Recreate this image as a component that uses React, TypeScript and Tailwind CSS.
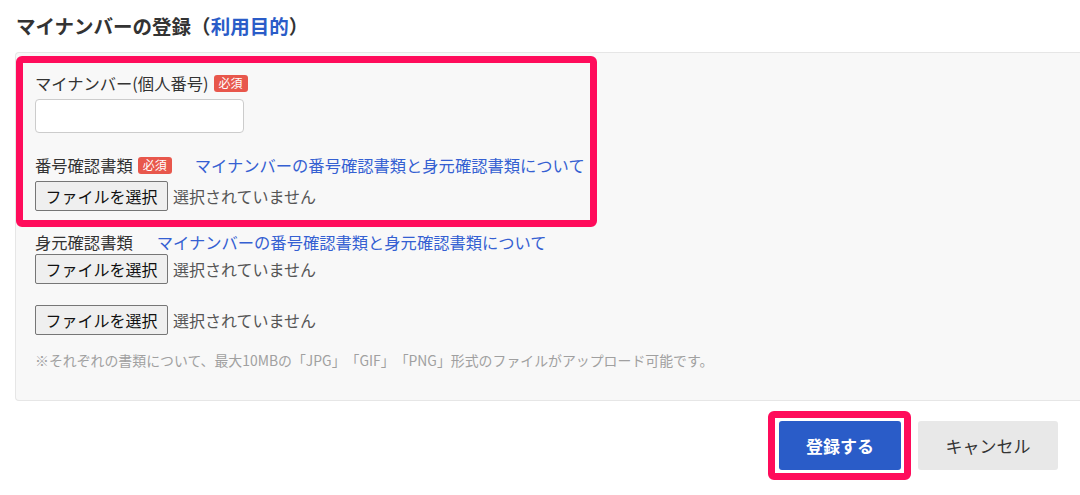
const font = {
  fontFamily: '"Noto Sans CJK JP", "Noto Sans", sans-serif',
};

function Required() {
  return (
    <span className="ml-[5px] inline-flex h-[17px] items-center rounded-[3px] bg-[#e8574c] px-[5px] align-middle text-[12px] leading-none text-white">
      必須
    </span>
  );
}

function FileField({ className = "" }: { className?: string }) {
  return (
    <div className={`flex items-center ${className}`}>
      <button className="flex h-[30px] w-[133px] items-center justify-center rounded-[2px] border border-[#767676] bg-[#efefef] text-[16px] text-[#111]">
        ファイルを選択
      </button>
      <span className="ml-[5px] text-[16px] text-[#555]">選択されていません</span>
    </div>
  );
}

const linkText = "マイナンバーの番号確認書類と身元確認書類について";

export default function App() {
  return (
    <div
      className="h-[495px] w-[1080px] overflow-hidden bg-white pl-[15px] text-[#333] [text-spacing-trim:space-all]"
      style={font}
    >
      <h2 className="flex h-[52px] items-center pl-[1px] text-[19.5px] font-bold">
        マイナンバーの登録（<span className="text-[#2a5cc8]">利用目的</span>）
      </h2>

      <div className="rounded-l-[4px] border-y border-l border-[#e6e6e6] bg-[#f8f8f8] pt-[3px] pb-[30px] pl-[19px]">
        <div className="ml-[-19px] w-[581px] rounded-[6px] border-[7px] border-[#ff0c5b] pt-[8px] pb-[9px] pl-[12px]">
          <div className="flex h-[24px] items-center text-[16.3px]">
            マイナンバー(個人番号)
            <Required />
          </div>
          <input className="mt-[4px] block h-[34px] w-[209px] rounded-[4px] border border-[#cccccc] bg-white" />
          <div className="mt-[20px] flex h-[24px] items-center text-[16.3px]">
            番号確認書類
            <Required />
            <a className="ml-[23px] text-[#3560d2]">{linkText}</a>
          </div>
          <FileField className="mt-[4px]" />
        </div>

        <div className="mt-[4px] flex h-[23px] items-center text-[16.3px]">
          身元確認書類
          <a className="ml-[24px] text-[#3560d2]">{linkText}</a>
        </div>
        <FileField />
        <FileField className="mt-[21px]" />
        <p className="mt-[15px] text-[13.9px] leading-[20px] text-[#a0a0a0]">
          ※それぞれの書類について、最大10MBの「JPG」「GIF」「PNG」形式のファイルがアップロード可能です。
        </p>
      </div>

      <div className="mt-[10px] flex items-center justify-end pr-[22px]">
        <div className="rounded-[6px] border-[7px] border-[#ff0c5b] bg-white py-[3px] pr-[3px] pl-[4px]">
          <button className="flex h-[49px] w-[122px] items-center justify-center rounded-[3px] bg-[#2a5cc8] text-[17px] font-bold text-white">
            登録する
          </button>
        </div>
        <button className="ml-[7px] flex h-[49px] w-[140px] items-center justify-center rounded-[3px] bg-[#e8e8e8] text-[17px] text-[#333]">
          キャンセル
        </button>
      </div>
    </div>
  );
}
